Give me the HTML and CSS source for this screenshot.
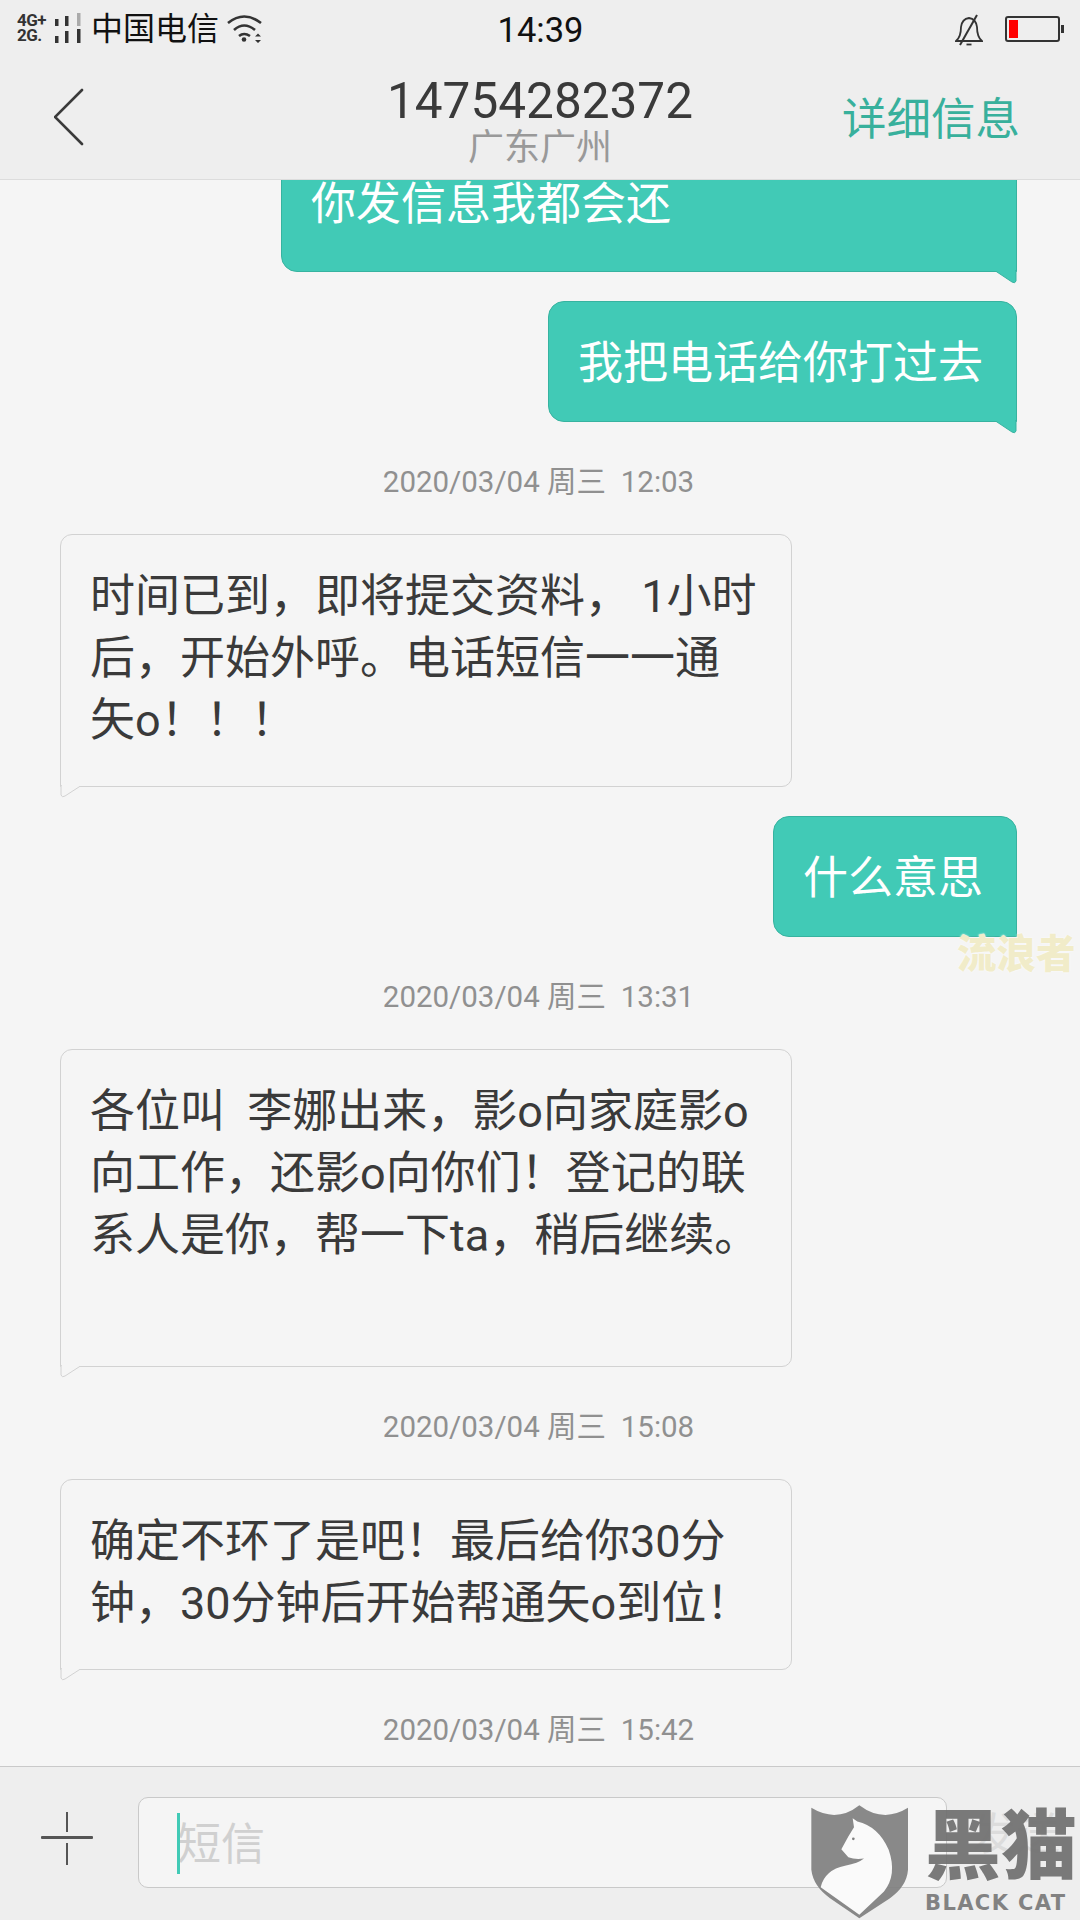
FILE: index.html
```html
<!DOCTYPE html>
<html lang="zh-CN">
<head>
<meta charset="utf-8">
<title>14754282372</title>
<link rel="stylesheet" href="styles.css">
</head>
<body>
<div class="page">
  <header class="top">
    <div class="status">
      <div class="status-left">
        <div class="net">
          <div class="net-labels">4G+<br>2G.</div>
          <svg class="bars" viewBox="0 0 27 30" width="27" height="30">
            <rect x="1" y="6" width="3.500" height="7" fill="#333"/><rect x="1" y="23" width="3.500" height="7" fill="#333"/>
            <rect x="11" y="3" width="3.500" height="10" fill="#333"/><rect x="11" y="18" width="3.500" height="12" fill="#333"/>
            <rect x="23" y="0" width="3.500" height="13" fill="#aaa"/><rect x="23" y="16" width="3.500" height="14" fill="#333"/>
          </svg>
        </div>
        <span class="carrier">中国电信</span>
        <svg class="wifi" viewBox="0 0 38 30" width="38" height="30" fill="none" stroke="#333" stroke-width="2.6">
          <path d="M2 10Q18 -3 35 10"/>
          <path d="M8 17Q18 8 29 17"/>
          <path d="M13 23Q18 19 24 23"/>
          <circle cx="18" cy="26.500" r="2.300" fill="#333" stroke="none"/>
          <path d="M29 23.500h6l-3 -3zM29 27h6l-3 3z" fill="#333" stroke="none"/>
        </svg>
      </div>
      <div class="time">14:39</div>
      <div class="status-right">
        <svg class="bell" viewBox="0 0 28 32" width="28" height="32" fill="none" stroke="#333" stroke-width="1.800">
          <path d="M1 27Q6 23 6 13Q7 5 14 4Q21 5 22 13Q22 23 27 27Z"/>
          <path d="M5 31L22 1" stroke-width="2"/>
          <path d="M11.500 30.500h5" stroke-width="1.800"/>
        </svg>
        <div class="battery"><div class="battery-level"></div></div>
        <div class="battery-nub"></div>
      </div>
    </div>
    <div class="nav">
      <svg class="back" viewBox="0 0 30 58" width="30" height="58" fill="none" stroke="#3a3a3a" stroke-width="2.600" stroke-linecap="round">
        <path d="M28 2L1 29L28 56"/>
      </svg>
      <div class="who">
        <div class="number">14754282372</div>
        <div class="place">广东广州</div>
      </div>
      <div class="details">详细信息</div>
    </div>
  </header>

  <main class="thread">
    <div class="bubble sent first">你发信息我都会还<svg class="tail tail-sent" viewBox="0 0 24 14" width="24" height="14"><path d="M1 0L19 12Q22 14 23 11V0Z" fill="#41cab6" stroke="#37b3a0"/><path d="M1 0H22" stroke="#41cab6" stroke-width="2"/></svg></div>
    <div class="bubble sent">我把电话给你打过去<svg class="tail tail-sent" viewBox="0 0 24 14" width="24" height="14"><path d="M1 0L19 12Q22 14 23 11V0Z" fill="#41cab6" stroke="#37b3a0"/><path d="M1 0H22" stroke="#41cab6" stroke-width="2"/></svg></div>
    <div class="stamp">2020/03/04 周三&nbsp; 12:03</div>
    <div class="bubble received">时间已到&#65292;即将提交资料&#65292; 1小时<br>后&#65292;开始外呼。电话短信一一通<br>矢o&#65281;&#65281;&#65281;<svg class="tail tail-received" viewBox="0 0 24 13" width="24" height="13"><path d="M22 0L5 11Q2 13 1 10V0Z" fill="#f5f5f5" stroke="#d2d2d2"/><path d="M2 0H22" stroke="#f5f5f5" stroke-width="2"/></svg></div>
    <div class="bubble sent after-received">什么意思</div>
    <div class="stamp">2020/03/04 周三&nbsp; 13:31</div>
    <div class="bubble received spaced">各位叫&nbsp; 李娜出来&#65292;影o向家庭影o<br>向工作&#65292;还影o向你们&#65281;登记的联<br>系人是你&#65292;帮一下ta&#65292;稍后继续。<br>&nbsp;<svg class="tail tail-received" viewBox="0 0 24 13" width="24" height="13"><path d="M22 0L5 11Q2 13 1 10V0Z" fill="#f5f5f5" stroke="#d2d2d2"/><path d="M2 0H22" stroke="#f5f5f5" stroke-width="2"/></svg></div>
    <div class="stamp">2020/03/04 周三&nbsp; 15:08</div>
    <div class="bubble received">确定不环了是吧&#65281;最后给你30分<br>钟&#65292;30分钟后开始帮通矢o到位&#65281;<svg class="tail tail-received" viewBox="0 0 24 13" width="24" height="13"><path d="M22 0L5 11Q2 13 1 10V0Z" fill="#f5f5f5" stroke="#d2d2d2"/><path d="M2 0H22" stroke="#f5f5f5" stroke-width="2"/></svg></div>
    <div class="stamp">2020/03/04 周三&nbsp; 15:42</div>
  </main>

  <footer class="composer">
    <div class="plus"><span class="plus-h"></span><span class="plus-v"></span></div>
    <div class="field"><span class="caret"></span><span class="hint">短信</span></div>
    <div class="send">发送</div>
  </footer>

  <div class="mark-wander">流浪者</div>
  <div class="blackcat">
    <svg class="shield" viewBox="90 70 300 350" width="100" height="117">
      <path d="M94 84Q170 130 238 76Q310 130 384 84L384 270Q380 320 330 355L238 415L150 355Q100 320 94 270Z" fill="#7f7f7f" fill-opacity=".92"/>
      <path d="M218 115L232 125Q296 140 326 210Q352 285 312 335L238 405L122 322Q135 270 195 258Q235 250 252 236Q225 240 205 232L184 208L205 170L222 142Z" fill="#fafafa"/>
      <circle cx="220" cy="177" r="4" fill="#7f7f7f"/>
    </svg>
    <div class="brand">
      <div class="brand-cn">黑猫</div>
      <div class="brand-en">BLACK CAT</div>
    </div>
  </div>
</div>
</body>
</html>
```

FILE: styles.css
```css
* { box-sizing: border-box; }
html, body { margin: 0; padding: 0; }
body {
  width: 1080px;
  height: 1920px;
  background: #f5f5f5;
  font-family: Roboto, "Noto Sans CJK SC", sans-serif;
}
.page {
  position: relative;
  width: 1080px;
  height: 1920px;
  display: flex;
  flex-direction: column;
  overflow: hidden;
}

/* header */
.top {
  height: 180px;
  flex: none;
  background: #eeeeee;
  border-bottom: 1px solid #dcdcdc;
}
.status {
  height: 58px;
  padding: 0 16px 0 17px;
  display: grid;
  grid-template-columns: 1fr auto 1fr;
  align-items: center;
  color: #111;
}
.status-left { display: flex; align-items: center; }
.net { display: flex; align-items: center; margin-top: -3px; }
.net-labels {
  width: 37px;
  font-size: 17px;
  font-weight: 700;
  line-height: 15px;
  letter-spacing: -.6px;
  color: #333;
}
.carrier { font-size: 32px; line-height: 40px; margin-left: 10px; color: #111; }
.wifi { margin-left: 7px; margin-top: -2px; }
.time { font-size: 34.500px; line-height: 40px; margin-top: 2px; color: #111; }
.status-right { display: flex; align-items: center; justify-content: flex-end; }
.bell { margin-top: 1px; }
.battery {
  width: 55px;
  height: 26px;
  margin-left: 22px;
  padding: 2px;
  border: 2px solid #333;
  border-radius: 3px;
  background: #eee;
}
.battery-level { width: 9px; height: 100%; background: #ff0000; }
.battery-nub { width: 3px; height: 8px; margin-left: 1px; background: #333; }

.nav {
  height: 121px;
  padding: 0 60px;
  display: grid;
  grid-template-columns: 1fr auto 1fr;
  align-items: start;
}
.back { margin-top: 30px; margin-left: -6px; }
.who { text-align: center; }
.number {
  font-size: 49.500px;
  line-height: 54px;
  margin-top: 16px;
  color: #3a3a3a;
}
.place {
  font-size: 36px;
  line-height: 38px;
  margin-top: 1px;
  color: #999999;
}
.details {
  justify-self: end;
  font-size: 44.500px;
  line-height: 60px;
  margin-top: 32px;
  color: #38b09c;
}

/* thread */
.thread {
  flex: 1;
  min-height: 0;
  overflow: hidden;
  display: flex;
  flex-direction: column;
  justify-content: flex-end;
  align-items: flex-start;
  padding: 0 63px 0 60px;
}
.bubble {
  position: relative;
  flex: none;
  font-size: 45px;
  line-height: 62px;
  white-space: nowrap;
}
.sent {
  align-self: flex-end;
  padding: 30.500px 33px 26.500px 29px;
  background: #41cab6;
  border: 1px solid #37b3a0;
  border-radius: 16px 16px 0 16px;
  color: #ffffff;
}
.sent + .sent { margin-top: 29px; }
.sent.first { width: 736px; padding: 30px 29px 35px; }
.after-received { margin-top: 29px; }
.received {
  width: 732px;
  padding: 31px 30px 34px 29px;
  background: #f5f5f5;
  border: 1px solid #d2d2d2;
  border-radius: 12px 12px 10px 0;
  color: #3a3a3a;
}
.received.spaced { padding-bottom: 37px; }
.tail { position: absolute; top: 100%; display: block; }
.tail-sent { right: -1px; margin-top: -1px; }
.tail-received { left: -1px; margin-top: -1px; }
.stamp {
  align-self: center;
  height: 40px;
  margin: 40px 0 32px;
  font-size: 29.500px;
  line-height: 40px;
  white-space: nowrap;
  color: #909090;
}
.stamp:last-child { margin-bottom: 16px; }

/* composer */
.composer {
  position: relative;
  height: 154px;
  flex: none;
  display: flex;
  align-items: flex-start;
  padding: 30px 133px 0 41px;
  background: #eeeeee;
  border-top: 1px solid #c9c9c9;
}
.plus { position: relative; width: 52px; height: 53px; margin-top: 15px; flex: none; }
.plus-h { position: absolute; left: 0; top: 24px; width: 52px; height: 3px; background: #555; border-radius: 1px; }
.plus-v {
  position: absolute;
  left: 25px;
  top: 0;
  width: 2px;
  height: 53px;
  background: linear-gradient(#555 0 20px, transparent 20px 31px, #555 31px);
}
.field {
  flex: 1;
  height: 91px;
  margin-left: 45px;
  padding-left: 38px;
  display: flex;
  align-items: center;
  position: relative;
  background: #f5f5f5;
  border: 1px solid #c9c9c9;
  border-radius: 10px;
}
.caret {
  position: absolute;
  left: 38px;
  top: 15px;
  width: 3px;
  height: 61px;
  background: #41cab6;
}
.hint { font-size: 44px; line-height: 60px; color: #d0d0d0; margin-top: 4px; }
.send {
  position: absolute;
  left: 972px;
  top: 38px;
  font-size: 44px;
  line-height: 60px;
  color: #dcdcdc;
}

/* overlays */
.mark-wander {
  position: absolute;
  left: 957px;
  top: 930px;
  font-size: 39.500px;
  font-weight: 900;
  line-height: 50px;
  white-space: nowrap;
  color: #f1ecc9;
  text-shadow: 0 0 2px #ffffff;
}
.blackcat {
  position: absolute;
  left: 810px;
  top: 1803px;
  display: flex;
  color: #707070;
}
.shield { flex: none; }
.brand { margin-left: 15px; }
.brand-cn {
  font-size: 76px;
  font-weight: 900;
  line-height: 88px;
  white-space: nowrap;
  opacity: .92;
}
.brand-en {
  font-family: "DejaVu Sans", sans-serif;
  font-size: 21px;
  font-weight: 700;
  line-height: 24px;
  letter-spacing: 1.400px;
  white-space: nowrap;
  opacity: .85;
}
```
